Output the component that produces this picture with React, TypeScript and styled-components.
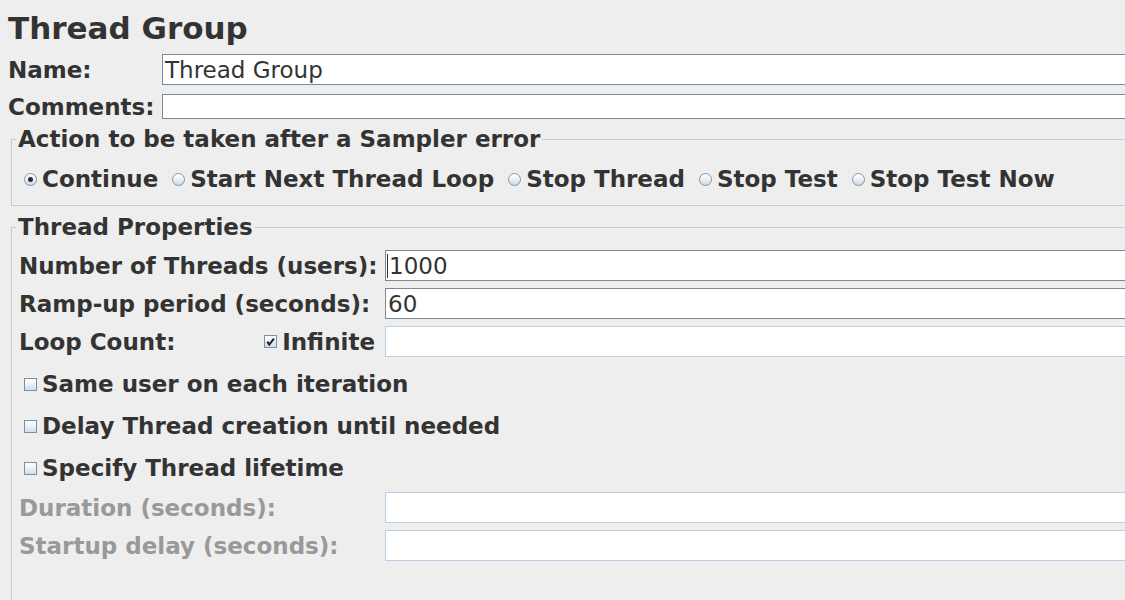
import React from "react";
import styled, { createGlobalStyle } from "styled-components";

const Global = createGlobalStyle`
  html, body { margin: 0; padding: 0; background: #eeeeee; overflow: hidden; }
  body { font-family: "DejaVu Sans", "Noto Sans", sans-serif; color: #333333; }
`;

const Page = styled.div`
  width: 1200px;
  height: 600px;
  padding-left: 8px;
  box-sizing: border-box;
  overflow: hidden;
`;

const Title = styled.h1`
  margin: 10px 0 0;
  font-size: 31px;
  line-height: 36px;
  font-weight: bold;
  color: #333333;
`;

const NameGrid = styled.div`
  display: grid;
  grid-template-columns: 154px 1fr;
  grid-template-rows: 31px 25px;
  row-gap: 9px;
  align-items: center;
  margin-top: 8px;
`;

const Label = styled.span<{ $disabled?: boolean }>`
  font-size: 23px;
  line-height: 26px;
  font-weight: bold;
  color: ${(p) => (p.$disabled ? "#999999" : "#333333")};
  white-space: nowrap;
`;

const Field = styled.div<{ $disabled?: boolean }>`
  box-sizing: border-box;
  height: 100%;
  display: flex;
  align-items: center;
  padding: 0 2px;
  background: #ffffff;
  border: 1px solid ${(p) => (p.$disabled ? "#b8cfe5" : "#7a8a99")};
  font-size: 23px;
  line-height: 26px;
  color: #333333;
  white-space: nowrap;
`;

const Caret = styled.span`
  display: inline-block;
  width: 1px;
  height: 24px;
  background: #333333;
  margin: 0 1px 0 -1px;
`;

const Group = styled.fieldset<{ $tail?: number }>`
  margin: 0 0 0 3px;
  padding: 0 0 ${(p) => p.$tail ?? 0}px 4px;
  border: 1px solid #b8cfe5;
  min-width: 0;
`;

const Legend = styled.legend`
  padding: 0 2px;
  font-size: 23px;
  line-height: 26px;
  font-weight: bold;
  color: #333333;
`;

const RadioRow = styled.div`
  display: flex;
  align-items: center;
  gap: 14px;
  height: 26px;
  padding-left: 8px;
  margin: 14px 0 13px;
`;

const Choice = styled.label`
  display: flex;
  align-items: center;
  gap: 5px;
  font-size: 23px;
  line-height: 26px;
  font-weight: bold;
  color: #333333;
  white-space: nowrap;
`;

const RadioDot = styled.span<{ $on?: boolean }>`
  box-sizing: border-box;
  width: 13px;
  height: 13px;
  border-radius: 50%;
  border: 1px solid #8595a6;
  background: linear-gradient(180deg, #ffffff 0%, #eef3f8 45%, #c9d8e8 100%);
  display: flex;
  align-items: center;
  justify-content: center;
  &::after {
    content: "";
    display: ${(p) => (p.$on ? "block" : "none")};
    width: 5px;
    height: 5px;
    border-radius: 50%;
    background: #2b2b2b;
  }
`;

const Box = styled.span`
  box-sizing: border-box;
  width: 13px;
  height: 13px;
  border: 1px solid #7f8fa3;
  background: linear-gradient(180deg, #ffffff 0%, #eef3f8 40%, #cfdceb 100%);
  display: flex;
  align-items: center;
  justify-content: center;
`;

const PropGrid = styled.div`
  display: grid;
  grid-template-columns: 361px 1fr;
  column-gap: 5px;
  grid-auto-rows: 31px;
  row-gap: 7px;
  align-items: center;
  padding-left: 3px;
`;

const TopGrid = styled(PropGrid)`
  margin-top: 10px;
`;

const BottomGrid = styled(PropGrid)`
  margin-top: 11px;
`;

const LoopCell = styled.div`
  display: flex;
  align-items: center;
  justify-content: space-between;
  padding-right: 5px;
`;

const CheckList = styled.div`
  display: flex;
  flex-direction: column;
  gap: 16px;
  margin-top: 14px;
  padding-left: 8px;
`;

const Check = ({ on }: { on?: boolean }) => (
  <Box>
    {on && (
      <svg width="9" height="9" viewBox="0 0 9 9">
        <path d="M1.3 4.6 L3.2 7.6 L8 1.6" fill="none" stroke="#222" strokeWidth="2" />
      </svg>
    )}
  </Box>
);

export default function App() {
  return (
    <>
      <Global />
      <Page>
        <Title>Thread Group</Title>
        <NameGrid>
          <Label>Name:</Label>
          <Field>Thread Group</Field>
          <Label>Comments:</Label>
          <Field />
        </NameGrid>

        <Group style={{ marginTop: 7 }}>
          <Legend>Action to be taken after a Sampler error</Legend>
          <RadioRow>
            <Choice><RadioDot $on />Continue</Choice>
            <Choice><RadioDot />Start Next Thread Loop</Choice>
            <Choice><RadioDot />Stop Thread</Choice>
            <Choice><RadioDot />Stop Test</Choice>
            <Choice><RadioDot />Stop Test Now</Choice>
          </RadioRow>
        </Group>

        <Group style={{ marginTop: 8 }} $tail={80}>
          <Legend>Thread Properties</Legend>
          <TopGrid>
            <Label>Number of Threads (users):</Label>
            <Field><Caret />1000</Field>
            <Label>Ramp-up period (seconds):</Label>
            <Field>60</Field>
            <LoopCell>
              <Label>Loop Count:</Label>
              <Choice><Check on />Infinite</Choice>
            </LoopCell>
            <Field $disabled />
          </TopGrid>
          <CheckList>
            <Choice><Check />Same user on each iteration</Choice>
            <Choice><Check />Delay Thread creation until needed</Choice>
            <Choice><Check />Specify Thread lifetime</Choice>
          </CheckList>
          <BottomGrid>
            <Label $disabled>Duration (seconds):</Label>
            <Field $disabled />
            <Label $disabled>Startup delay (seconds):</Label>
            <Field $disabled />
          </BottomGrid>
        </Group>
      </Page>
    </>
  );
}
